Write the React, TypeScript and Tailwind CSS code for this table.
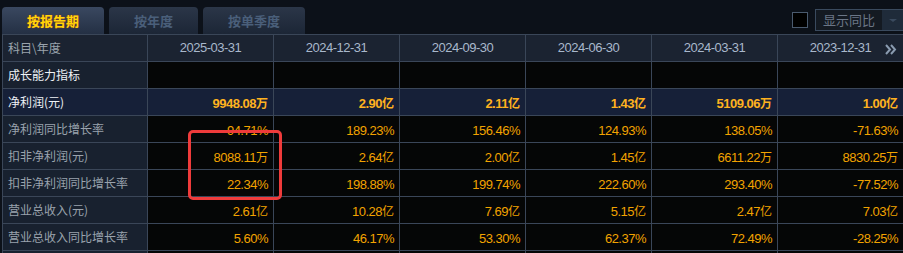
import React from "react";

const NUM = "font-['Liberation_Sans','Noto_Sans_CJK_SC',sans-serif] tracking-[-0.5px]";
const CJK = "font-['Noto_Sans_CJK_SC',sans-serif]";

const dates = ["2025-03-31", "2024-12-31", "2024-09-30", "2024-06-30", "2024-03-31", "2023-12-31"];

type Row = { label: string; values: string[]; bold?: boolean; white?: boolean };

const rows: Row[] = [
  { label: "成长能力指标", values: ["", "", "", "", "", ""], white: true },
  { label: "净利润(元)", values: ["9948.08万", "2.90亿", "2.11亿", "1.43亿", "5109.06万", "1.00亿"], bold: true, white: true },
  { label: "净利润同比增长率", values: ["94.71%", "189.23%", "156.46%", "124.93%", "138.05%", "-71.63%"] },
  { label: "扣非净利润(元)", values: ["8088.11万", "2.64亿", "2.00亿", "1.45亿", "6611.22万", "8830.25万"] },
  { label: "扣非净利润同比增长率", values: ["22.34%", "198.88%", "199.74%", "222.60%", "293.40%", "-77.52%"] },
  { label: "营业总收入(元)", values: ["2.61亿", "10.28亿", "7.69亿", "5.15亿", "2.47亿", "7.03亿"] },
  { label: "营业总收入同比增长率", values: ["5.60%", "46.17%", "53.30%", "62.37%", "72.49%", "-28.25%"] },
  { label: "", values: ["", "", "", "", "", ""] },
];

function Value({ v, bold }: { v: string; bold?: boolean }) {
  const m = v.match(/^(.*?)([万亿]?)$/);
  const num = m ? m[1] : v;
  const unit = m ? m[2] : "";
  return (
    <span className={bold ? "font-bold text-[#ffb21f]" : "text-[#f2a300]"}>
      <span className={`${NUM} text-[13px]`}>{num}</span>
      {unit && <span className={`${CJK} text-[12px]`}>{unit}</span>}
    </span>
  );
}

function Tab({ label, active, w }: { label: string; active?: boolean; w: string }) {
  return (
    <div
      className={`${w} h-[27px] rounded-t-[4px] flex items-center justify-center ${CJK} text-[13px] font-bold ${
        active
          ? "bg-gradient-to-b from-[#3a4860] to-[#243044] text-[#ffd60a] [text-shadow:0_0_1px_#c2410c]"
          : "bg-gradient-to-b from-[#2b3648] to-[#1c2636] text-[#4a5f7a]"
      }`}
    >
      {label}
    </div>
  );
}

export default function App() {
  return (
    <div className="w-[903px] h-[253px] overflow-hidden bg-[#0c1119] relative">
      <div className="h-[34px] flex items-end pl-[2px] gap-[5px]">
        <Tab label="按报告期" active w="w-[102px]" />
        <Tab label="按年度" w="w-[89px]" />
        <Tab label="按单季度" w="w-[102px]" />
        <div className="ml-auto self-start mt-[9px] mr-[-2px] flex items-center gap-[7px]">
          <div className="w-[16px] h-[16px] bg-black border border-[#4a5a6e]" />
          <div className="w-[90px] h-[22px] border border-[#3a4a5e] bg-[#141a22] flex">
            <div className={`flex-1 flex items-center pl-[7px] ${CJK} text-[13px] text-[#6b7686]`}>显示同比</div>
            <div className="w-[22px] bg-[#1f2b3a] flex items-center justify-center">
              <div className="w-0 h-0 border-l-[4px] border-r-[4px] border-t-[3px] border-l-transparent border-r-transparent border-t-[#3a4a5e]" />
            </div>
          </div>
        </div>
      </div>

      <div className="ml-[2px] border-l border-t border-[#3a4658] grid grid-cols-[145px_repeat(6,126px)]">
        <div className={`h-[27px] border-r border-b border-[#3a4658] bg-[#1b2331] flex items-center pl-[5px] ${CJK} text-[12px] text-[#9aa3ad]`}>
          科目\年度
        </div>
        {dates.map((d, i) => (
          <div
            key={d}
            className={`relative h-[27px] border-r border-b border-[#3a4658] bg-[#1b2331] flex items-center justify-center ${NUM} text-[13px] text-[#a9b8cc]`}
          >
            {d}
            {i === 5 && (
              <svg className="absolute right-[6px] top-[9px]" width="12" height="11" viewBox="0 0 12 11">
                <path d="M1 1 L5 5.5 L1 10 M6 1 L10 5.5 L6 10" stroke="#8a9bb0" strokeWidth="2" fill="none" />
              </svg>
            )}
          </div>
        ))}
        {rows.map((r, ri) => (
          <React.Fragment key={ri}>
            <div
              className={`h-[27px] border-r border-b border-[#3a4658] flex items-center pl-[5px] ${CJK} text-[12px] ${
                r.bold ? "bg-[#162038]" : "bg-[#18212f]"
              } ${r.white ? "text-[#eef2f6]" : "text-[#9aa3ad]"}`}
            >
              {r.label}
            </div>
            {r.values.map((v, vi) => (
              <div
                key={vi}
                className={`h-[27px] border-r border-b border-[#3a4658] flex items-center justify-end pr-[5px] ${
                  r.bold ? "bg-[#162038]" : "bg-[#050606]"
                }`}
              >
                {v && <Value v={v} bold={r.bold} />}
              </div>
            ))}
          </React.Fragment>
        ))}
      </div>

      <div className="absolute left-[188px] top-[130px] w-[94px] h-[70px] border-[3px] border-[#ef3b3b] rounded-[5px]" />
    </div>
  );
}
